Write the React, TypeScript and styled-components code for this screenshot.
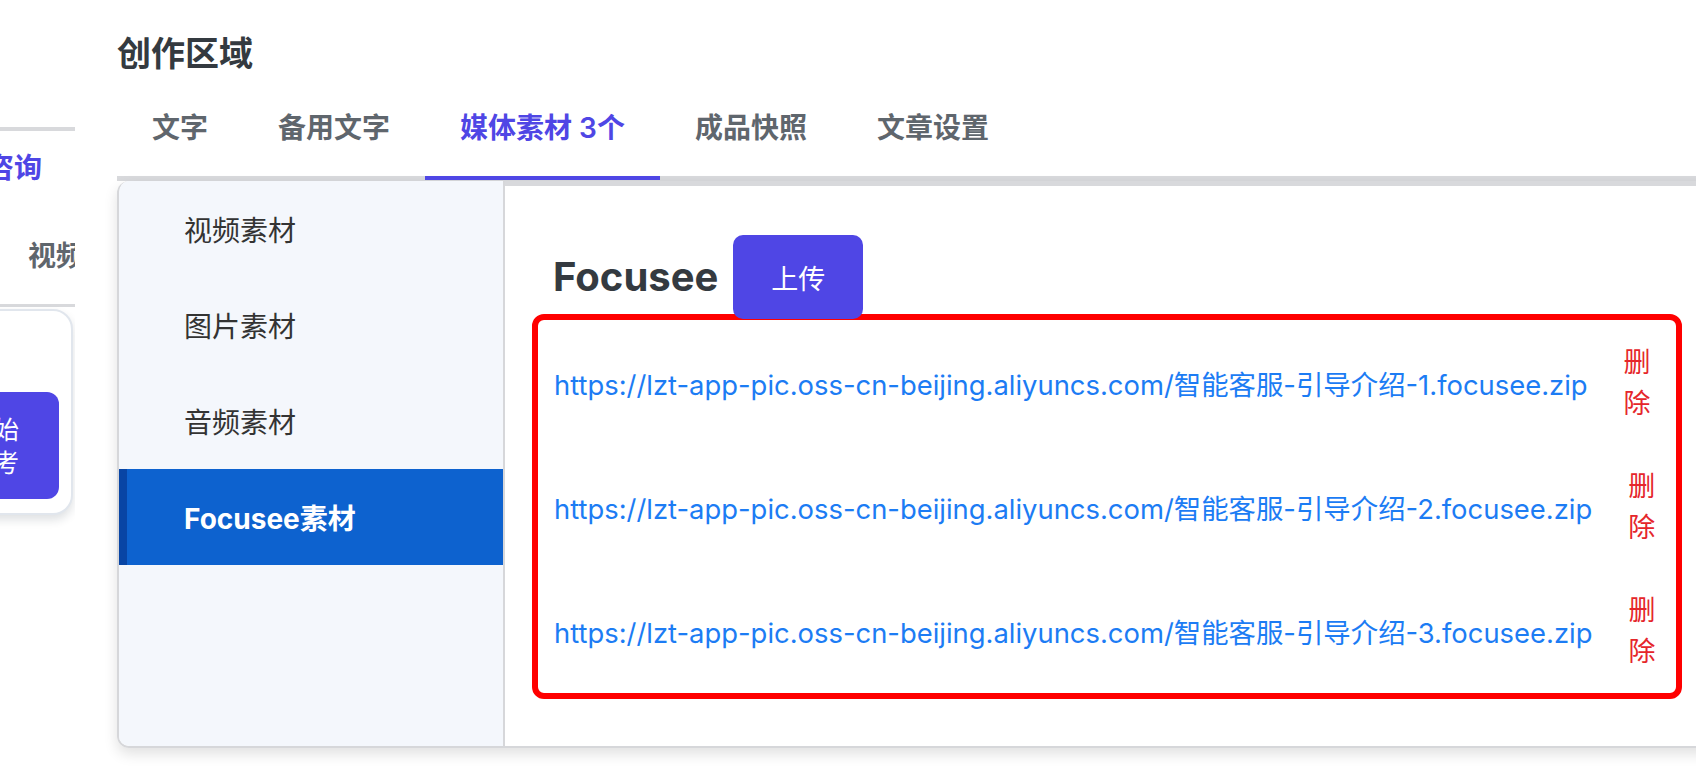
import styled, { createGlobalStyle } from "styled-components";

type TabItem = {
  label: string;
  active?: boolean;
};

const tabs: TabItem[] = [
  { label: "文字" },
  { label: "备用文字" },
  { label: "媒体素材 3个", active: true },
  { label: "成品快照" },
  { label: "文章设置" },
];

const categories = ["视频素材", "图片素材", "音频素材", "Focusee素材"];
const activeCategory = 3;

const files = [1, 2, 3].map(
  (n) =>
    `https://lzt-app-pic.oss-cn-beijing.aliyuncs.com/智能客服-引导介绍-${n}.focusee.zip`
);

const App = () => {
  return (
    <>
      <GlobalStyle />
      <StyledPage>
        <StyledLeftPane>
          <StyledDivider $thick={4} />
          <StyledNavList>
            <StyledNavItem $active $offset={-14}>
              咨询
            </StyledNavItem>
            <StyledNavItem $offset={28}>视频号</StyledNavItem>
          </StyledNavList>
          <StyledDivider $thick={3} />
          <StyledSideCard>
            <StyledStartButton>
              开始
              <br />
              思考
            </StyledStartButton>
          </StyledSideCard>
        </StyledLeftPane>

        <StyledMain>
          <StyledTitle>创作区域</StyledTitle>
          <StyledTabBar>
            {tabs.map((tab) => (
              <StyledTab key={tab.label} $active={!!tab.active}>
                {tab.label}
              </StyledTab>
            ))}
          </StyledTabBar>

          <StyledCard>
            <StyledSidebar>
              {categories.map((name, i) => (
                <StyledSideItem key={name} $active={i === activeCategory}>
                  {name}
                </StyledSideItem>
              ))}
            </StyledSidebar>

            <StyledContent>
              <StyledHeadRow>
                <StyledHeading>Focusee</StyledHeading>
                <StyledUploadButton>上传</StyledUploadButton>
              </StyledHeadRow>
              <StyledFileBox>
                {files.map((url) => (
                  <StyledFileRow key={url}>
                    <StyledFileLink href="#">{url}</StyledFileLink>
                    <StyledDeleteButton>删除</StyledDeleteButton>
                  </StyledFileRow>
                ))}
              </StyledFileBox>
            </StyledContent>
          </StyledCard>
        </StyledMain>
      </StyledPage>
    </>
  );
};

const GlobalStyle = createGlobalStyle`
  html, body {
    margin: 0;
    padding: 0;
    background: #fff;
    overflow: hidden;
  }
  body {
    font-family: Inter, "Noto Sans CJK SC", sans-serif;
    color: #343a40;
  }
  * {
    box-sizing: border-box;
  }
`;

const StyledPage = styled.div`
  display: flex;
  width: 100vw;
  height: 766px;
  overflow: hidden;
`;

/* the neighbouring panel, scrolled mostly out of view */
const StyledLeftPane = styled.div`
  flex: 0 0 75px;
  overflow: hidden;
  padding-top: 127px;
`;

const StyledDivider = styled.div<{ $thick: number }>`
  height: ${({ $thick }) => $thick}px;
  background: #d8d9dc;
`;

const StyledNavList = styled.div`
  display: flex;
  flex-direction: column;
  gap: 48px;
  padding: 17px 0 28px;
`;

const StyledNavItem = styled.div<{ $active?: boolean; $offset: number }>`
  margin-left: ${({ $offset }) => $offset}px;
  white-space: nowrap;
  font-size: 28px;
  line-height: 40px;
  font-weight: 600;
  color: ${({ $active }) => ($active ? "#4f46e5" : "#5f666d")};
`;

const StyledSideCard = styled.div`
  display: flex;
  justify-content: flex-end;
  align-items: flex-start;
  width: 223px;
  height: 206px;
  margin: 2px 0 0 -150px;
  padding: 81px 12px 0 0;
  background: #fff;
  border: 2px solid #e1e6ed;
  border-radius: 20px;
  box-shadow: 0 5px 10px rgba(30, 40, 60, 0.14);
`;

const StyledStartButton = styled.button`
  width: 130px;
  height: 107px;
  padding-top: 4px;
  border: none;
  border-radius: 12px;
  background: #4f46e5;
  color: #fff;
  font-family: inherit;
  font-size: 25px;
  line-height: 33px;
`;

const StyledMain = styled.div`
  flex: 0 0 1620px;
  margin-left: 42px;
`;

const StyledTitle = styled.h1`
  margin: 0;
  padding-top: 30px;
  font-size: 34px;
  line-height: 48px;
  font-weight: 700;
  color: #343a40;
`;

const StyledTabBar = styled.div`
  display: flex;
  border-bottom: 5px solid #d8d9dc;
`;

const StyledTab = styled.div<{ $active: boolean }>`
  padding: 30px 35px 28px;
  margin-bottom: -4px;
  font-size: 28px;
  line-height: 40px;
  font-weight: 600;
  white-space: nowrap;
  color: ${({ $active }) => ($active ? "#4f46e5" : "#5f666d")};
  border-bottom: 4px solid ${({ $active }) => ($active ? "#4f46e5" : "transparent")};
`;

const StyledCard = styled.div`
  display: flex;
  height: 567px;
  border: 2px solid #d6d7da;
  border-top: 0;
  border-radius: 12px 0 0 12px;
  overflow: hidden;
  box-shadow: 0 6px 14px rgba(0, 0, 0, 0.12);
`;

const StyledSidebar = styled.div`
  flex: 0 0 386px;
  display: flex;
  flex-direction: column;
  background: #f4f7fc;
  border-right: 2px solid #d6d7da;
`;

const StyledSideItem = styled.div<{ $active: boolean }>`
  display: flex;
  align-items: center;
  height: 96px;
  padding-left: 65px;
  font-size: 28px;
  font-weight: ${({ $active }) => ($active ? 700 : 400)};
  color: ${({ $active }) => ($active ? "#fff" : "#333")};
  background: ${({ $active }) => ($active ? "#0d62cf" : "transparent")};
  box-shadow: ${({ $active }) => ($active ? "inset 8px 0 0 #0845a5" : "none")};
`;

const StyledContent = styled.div`
  flex: 1;
  background: #fff;
  border-top: 5px solid #d8d9dc;
  padding: 49px 53px 0 27px;
`;

const StyledHeadRow = styled.div`
  position: relative;
  z-index: 1;
  display: flex;
  align-items: center;
  gap: 15px;
  padding-left: 21px;
`;

const StyledHeading = styled.h2`
  margin: 0;
  font-size: 40px;
  line-height: 48px;
  font-weight: 700;
  color: #343a40;
`;

const StyledUploadButton = styled.button`
  width: 130px;
  height: 84px;
  border: none;
  border-radius: 10px;
  background: #4f46e5;
  color: #fff;
  font-family: inherit;
  font-size: 27px;
`;

const StyledFileBox = styled.div`
  margin-top: -5px;
  padding: 1px 0 0 16px;
  border: 6px solid #ff0000;
  border-radius: 12px;
`;

const StyledFileRow = styled.div`
  display: flex;
  align-items: center;
  height: 124px;
`;

const StyledFileLink = styled.a`
  white-space: nowrap;
  font-size: 27.4px;
  color: #1c7cf4;
  text-decoration: none;
`;

const StyledDeleteButton = styled.button`
  width: 1em;
  margin-left: 36px;
  padding: 0;
  border: none;
  background: none;
  font-family: inherit;
  font-size: 27px;
  line-height: 41px;
  color: #e5262b;
`;

export default App;
